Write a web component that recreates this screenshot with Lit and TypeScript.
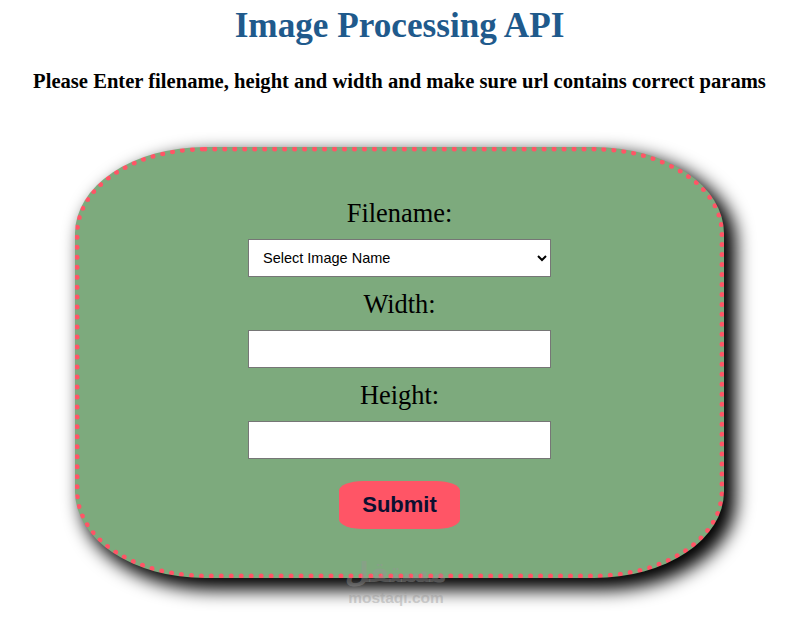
import { LitElement, html, css } from "lit";
import { customElement } from "lit/decorators.js";

@customElement("app-root")
export class AppRoot extends LitElement {
  static styles = css`
    :host {
      display: block;
      box-sizing: border-box;
      width: 793px;
      height: 618px;
      padding-left: 6px;
      overflow: hidden;
      position: relative;
      background: #fff;
      font-family: "Liberation Serif", "Times New Roman", serif;
      color: #000;
    }
    h1 {
      margin: 0;
      padding-top: 5px;
      height: 37px;
      line-height: 41px;
      text-align: center;
      font-size: 35.2px;
      font-weight: 700;
      color: #1f5a8c;
    }
    h2 {
      margin: 0;
      padding-top: 28px;
      line-height: 23px;
      text-align: center;
      font-size: 20.6px;
      font-weight: 700;
      white-space: nowrap;
    }
    .card {
      box-sizing: border-box;
      width: 649px;
      height: 431px;
      margin: 54px 0 0 69px;
      padding-top: 47px;
      background: #7daa7d;
      border: 5px dotted #ff5566;
      border-radius: 20%;
      box-shadow: 9px 9px 18px 3px #000;
      display: flex;
      flex-direction: column;
      align-items: center;
    }
    label {
      display: block;
      height: 29px;
      line-height: 29px;
      font-size: 26.4px;
      text-align: center;
    }
    .field {
      box-sizing: border-box;
      display: block;
      width: 303px;
      height: 38px;
      margin: 11px 0 13px;
      background: #fff;
      border: 1px solid #767676;
      border-radius: 0;
    }
    select.field {
      padding: 0 10px;
      font-family: "Liberation Sans", Arial, sans-serif;
      font-size: 14.5px;
      color: #000;
    }
    input.field {
      padding: 0 10px;
    }
    button {
      box-sizing: border-box;
      width: 121px;
      height: 48px;
      margin-top: 9px;
      border: none;
      border-radius: 20%;
      background: #ff5566;
      color: #0b1030;
      font-family: "Liberation Sans", Arial, sans-serif;
      font-size: 22px;
      font-weight: 700;
    }
    .mark {
      position: absolute;
      left: 340px;
      top: 556px;
      width: 112px;
      text-align: center;
      color: rgba(150, 150, 150, 0.42);
      pointer-events: none;
    }
    .mark .ar {
      display: block;
      height: 34px;
      line-height: 34px;
      font-family: "DejaVu Sans", sans-serif;
      font-size: 28px;
      font-weight: 700;
    }
    .mark .en {
      display: block;
      line-height: 16px;
      font-family: "Liberation Sans", Arial, sans-serif;
      font-size: 15.5px;
      font-weight: 700;
    }
  `;

  render() {
    return html`
      <h1>Image Processing API</h1>
      <h2>Please Enter filename, height and width and make sure url contains correct params</h2>
      <form class="card" @submit=${(e: Event) => e.preventDefault()}>
        <label for="f">Filename:</label>
        <select id="f" class="field">
          <option>Select Image Name</option>
        </select>
        <label for="w">Width:</label>
        <input id="w" class="field" type="text" />
        <label for="h">Height:</label>
        <input id="h" class="field" type="text" />
        <button type="submit">Submit</button>
      </form>
      <div class="mark">
        <span class="ar" dir="rtl">مستقل</span>
        <span class="en">mostaqi.com</span>
      </div>
    `;
  }
}
